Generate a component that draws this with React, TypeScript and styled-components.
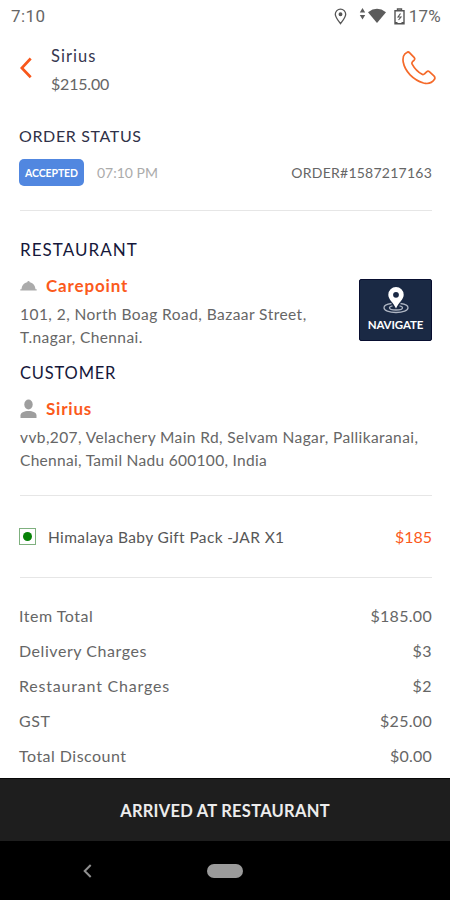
import React from "react";
import styled, { createGlobalStyle } from "styled-components";

const ORANGE = "#fb5a1c";
const NAVY = "#15173a";
const GREY = "#666666";

const GlobalStyle = createGlobalStyle`
  * { box-sizing: border-box; }
  body { margin: 0; background: #fff; }
  svg { display: block; flex: none; }
`;

const Screen = styled.div`
  display: flex;
  flex-direction: column;
  width: 450px;
  height: 900px;
  overflow: hidden;
  background: #fff;
  font-family: "Lato", "Noto Sans", sans-serif;
`;

const Text = styled.span<{ $size?: number; $gap?: number; $color?: string; $weight?: number; $line?: number }>`
  display: block;
  white-space: nowrap;
  font-size: ${(p) => p.$size ?? 16}px;
  letter-spacing: ${(p) => p.$gap ?? 0}px;
  color: ${(p) => p.$color ?? GREY};
  font-weight: ${(p) => p.$weight ?? 400};
  line-height: ${(p) => p.$line ?? 22}px;
`;

const StatusBar = styled.div`
  display: flex;
  align-items: center;
  height: 32px;
  padding: 0 9px 0 11px;
  font-family: "Roboto", sans-serif;
`;

const StatusIcons = styled.div`
  display: flex;
  align-items: center;
  margin-left: auto;
`;

const ConnectionGroup = styled.div`
  display: flex;
  align-items: center;
  gap: 7px;
  margin: 0 4px 0 12px;
`;

const Header = styled.header`
  display: flex;
  height: 66px;
  padding: 9px 14px 0 20px;
`;

const BackButton = styled.button`
  width: 31px;
  height: 54px;
  padding: 0;
  border: 0;
  background: none;
`;

const CallButton = styled.button`
  margin-left: auto;
  height: 54px;
  padding: 0;
  border: 0;
  background: none;
`;

const HeaderText = styled.div`
  display: flex;
  flex-direction: column;
  padding-top: 1px;
`;

const Content = styled.main`
  height: 680px;
  padding: 27px 18px 0 20px;
`;

const StatusHeading = styled.div`
  margin: 0 0 13px -1px;
`;

const StatusRow = styled.div`
  display: flex;
  align-items: center;
  height: 27px;
`;

const Chip = styled.div`
  display: flex;
  align-items: center;
  justify-content: center;
  width: 65px;
  height: 27px;
  margin: 0 13px 0 -1px;
  border-radius: 5px;
  background: #5187e0;
`;

const OrderId = styled.div`
  margin-left: auto;
`;

const Divider = styled.hr<{ $before: number; $after: number }>`
  height: 1px;
  margin: ${(p) => p.$before}px 0 ${(p) => p.$after}px;
  border: 0;
  background: #e6e6e6;
`;

const Party = styled.section<{ $after?: number }>`
  display: grid;
  grid-template-columns: 1fr auto;
  height: 74px;
  margin: 14px 0 ${(p) => p.$after ?? 0}px;
`;

const PartyName = styled.div`
  display: flex;
  align-items: center;
  gap: 9px;
  height: 22px;
  margin-bottom: 6px;
`;

const NavigateButton = styled.button`
  display: flex;
  flex-direction: column;
  align-items: center;
  width: 73px;
  height: 62px;
  margin: 4px 0 0;
  padding: 7px 0 0;
  border: 1px solid #080e30;
  border-radius: 2px;
  background: #1a2944;
  font-family: inherit;
`;

const ItemRow = styled.div`
  display: flex;
  align-items: center;
  height: 22px;
`;

const VegMark = styled.div`
  display: flex;
  align-items: center;
  justify-content: center;
  width: 17px;
  height: 17px;
  margin: 0 12px 1px -1px;
  border: 1px solid #7fb07f;
`;

const VegDot = styled.div`
  width: 9px;
  height: 9px;
  border-radius: 50%;
  background: #078207;
`;

const Price = styled.div`
  margin-left: auto;
`;

const TotalRow = styled.div`
  display: flex;
  align-items: center;
  justify-content: space-between;
  height: 35px;
  margin-left: -1px;
`;

const ActionBar = styled.button`
  display: flex;
  align-items: center;
  justify-content: center;
  height: 63px;
  padding: 1px 0 0;
  border: 0;
  border-top: 1px solid #080808;
  background: #1e1e1e;
  font-family: inherit;
`;

const NavBar = styled.nav`
  display: grid;
  grid-template-columns: 174px 102px 174px;
  align-items: center;
  justify-items: center;
  height: 59px;
  background: #000;
`;

const HomePill = styled.div`
  width: 36px;
  height: 14px;
  border-radius: 7px;
  background: #9b9b9b;
`;

const LocationIcon = () => (
  <svg width="13" height="17" viewBox="0 0 13 17" fill="none" stroke="#555" strokeWidth="1.3">
    <path d="M6.5 15.6C4 12.2 1.3 9.3 1.3 6.3a5.2 5.2 0 0 1 10.4 0c0 3-2.7 5.9-5.2 9.3Z" />
    <circle cx="6.5" cy="6.2" r="1.3" fill="#555" />
  </svg>
);

const DataWifiIcon = () => (
  <svg width="28" height="16" viewBox="0 0 28 16" fill="#5c5c5c">
    <path d="M3.5 0 6.2 4.6H.8ZM3.5 11.5.8 7H6.2Z" />
    <path d="M9 4.2Q18 -2.6 27 4.2L18 15Z" />
  </svg>
);

const BatteryIcon = () => (
  <svg width="11" height="17" viewBox="0 0 11 17" fill="none" stroke="#555" strokeWidth="1.4">
    <path d="M3.5 2.5V1h4v1.5M1 2.7h9v13H1Z" />
    <path d="M6.5 5.5 4 9H7L4.5 12" strokeWidth="1.1" />
    <path d="M1 15h2.500M7.5 15H10" strokeWidth="2" />
  </svg>
);

const PhoneIcon = () => (
  <svg width="36" height="36" viewBox="0 0 36 36" fill="none" stroke="#f56a2a" strokeWidth="1.7" strokeLinejoin="round">
    <path d="M4.800 4 6.700 2.600Q8.300 1.300 9.700 2.800L14.300 7.700Q15.300 9 14 10.300L12.500 11.700Q11.400 13 12.300 14.400C14.600 18.600 17.500 21.700 21.700 24.100Q23.200 25 24.500 23.900L26.600 21.800Q28 20.500 29.300 21.700L33.900 25.900Q35.500 27.500 34.500 29.300C32 33 28 34.200 23.500 33C13 29.600 5 21.500 3.200 12C2.700 8.600 3 5.800 4.800 4Z" />
  </svg>
);

const ClocheIcon = () => (
  <svg width="17" height="10" viewBox="0 0 17 10" fill="#ababab">
    <path d="M1.500 8.200C2 4 4.500 1.800 7.300 1.300a1.200 1.200 0 0 1 2.400 0C12.500 1.800 15 4 15.500 8.200ZM.3 8.200h16.400v1.300H.3Z" />
  </svg>
);

const PersonIcon = () => (
  <svg width="17" height="20" viewBox="0 0 17 20" fill="#9e9e9e">
    <ellipse cx="8.500" cy="5.500" rx="4.200" ry="5" />
    <path d="M.5 19V16.500C.5 13.500 4 12 8.500 12s8 1.500 8 4.500V19Z" />
  </svg>
);

const PinIcon = () => (
  <svg width="26" height="27" viewBox="0 0 26 27">
    <g fill="none" stroke="#aeb5c2" strokeWidth="1.3">
      <path d="M8.500 16.500C4 17 1 18.600 1 20.700c0 2.700 5 4.800 12 4.800s12-2.100 12-4.800c0-2.100-3-3.700-7.500-4.200" />
      <path d="M9.500 18.800C7.500 19.200 6.500 20 6.500 20.700c0 1.300 2.800 2.300 6.500 2.300s6.500-1 6.500-2.300c0-.7-1-1.500-3-1.900" />
    </g>
    <path fill="#fff" fillRule="evenodd" d="M13 21.500C10.500 15.500 5.300 12.500 5.300 7.700a7.700 7.700 0 0 1 15.400 0c0 4.800-5.200 7.800-7.700 13.800ZM13 4.900a2.900 2.900 0 1 0 0 5.800 2.900 2.900 0 0 0 0-5.800Z" />
  </svg>
);

const TOTALS = [
  { label: "Item Total", gap: 0.52, value: "$185.00", valueGap: 0.3 },
  { label: "Delivery Charges", gap: 0.55, value: "$3", valueGap: 0.5 },
  { label: "Restaurant Charges", gap: 0.8, value: "$2", valueGap: 0.5 },
  { label: "GST", gap: 0.6, value: "$25.00", valueGap: 0.3 },
  { label: "Total Discount", gap: 0.48, value: "$0.00", valueGap: 0.2 },
];

export default function App() {
  return (
    <Screen>
      <GlobalStyle />
      <StatusBar>
        <Text $size={17} $gap={0.4}>7:10</Text>
        <StatusIcons>
          <LocationIcon />
          <ConnectionGroup>
            <DataWifiIcon />
            <BatteryIcon />
          </ConnectionGroup>
          <Text $size={17} $gap={0.2}>17%</Text>
        </StatusIcons>
      </StatusBar>

      <Header>
        <BackButton aria-label="Back">
          <svg width="12" height="22" viewBox="0 0 12 22" fill="none" stroke="#f8571b" strokeWidth="2.7">
            <path d="M10.700 1.500 1.800 11 10.700 20.300" />
          </svg>
        </BackButton>
        <HeaderText>
          <Text $size={16.5} $gap={1.05} $color="#36374f" $line={28}>Sirius</Text>
          <Text $gap={-0.2} $line={28}>$215.00</Text>
        </HeaderText>
        <CallButton aria-label="Call">
          <PhoneIcon />
        </CallButton>
      </Header>

      <Content>
        <StatusHeading>
          <Text $gap={0.64} $color="#303148" $line={21}>ORDER STATUS</Text>
        </StatusHeading>
        <StatusRow>
          <Chip>
            <Text $size={10.5} $color="#fff" $weight={700} $gap={-0.1}>ACCEPTED</Text>
          </Chip>
          <Text $size={14} $color="#ababab">07:10 PM</Text>
          <OrderId>
            <Text $size={14} $gap={0.24}>ORDER#1587217163</Text>
          </OrderId>
        </StatusRow>

        <Divider $before={24} $after={28} />

        <Text $size={17} $gap={1.03} $color={NAVY}>RESTAURANT</Text>
        <Party $after={13}>
          <div>
            <PartyName>
              <ClocheIcon />
              <Text $size={17} $gap={0.85} $color={ORANGE} $weight={700}>Carepoint</Text>
            </PartyName>
            <Text $size={15.5} $gap={0.45} $line={23}>101, 2, North Boag Road, Bazaar Street,</Text>
            <Text $size={15.5} $gap={0.4} $line={23}>T.nagar, Chennai.</Text>
          </div>
          <NavigateButton>
            <PinIcon />
            <Text $size={11.5} $color="#fff" $weight={700} $gap={-0.1}>NAVIGATE</Text>
          </NavigateButton>
        </Party>

        <Text $size={16.5} $gap={0.82} $color={NAVY}>CUSTOMER</Text>
        <Party>
          <div>
            <PartyName>
              <PersonIcon />
              <Text $size={17} $gap={0.8} $color={ORANGE} $weight={700}>Sirius</Text>
            </PartyName>
            <Text $size={15.5} $gap={0.4} $line={23}>vvb,207, Velachery Main Rd, Selvam Nagar, Pallikaranai,</Text>
            <Text $size={15.5} $gap={0.3} $line={23}>Chennai, Tamil Nadu 600100, India</Text>
          </div>
        </Party>

        <Divider $before={23} $after={30} />

        <ItemRow>
          <VegMark>
            <VegDot />
          </VegMark>
          <Text $size={15.5} $gap={0.38} $color="#575757">Himalaya Baby Gift Pack -JAR X1</Text>
          <Price>
            <Text $color={ORANGE}>$185</Text>
          </Price>
        </ItemRow>

        <Divider $before={29} $after={20} />

        {TOTALS.map((row) => (
          <TotalRow key={row.label}>
            <Text $gap={row.gap}>{row.label}</Text>
            <Text $gap={row.valueGap}>{row.value}</Text>
          </TotalRow>
        ))}
      </Content>

      <ActionBar>
        <Text $size={16.5} $color="#ececec" $weight={700} $gap={0.26}>ARRIVED AT RESTAURANT</Text>
      </ActionBar>
      <NavBar>
        <svg width="9" height="14" viewBox="0 0 9 14" fill="none" stroke="#909090" strokeWidth="2">
          <path d="M7.700 1 1.700 7 7.700 13" />
        </svg>
        <HomePill />
      </NavBar>
    </Screen>
  );
}
